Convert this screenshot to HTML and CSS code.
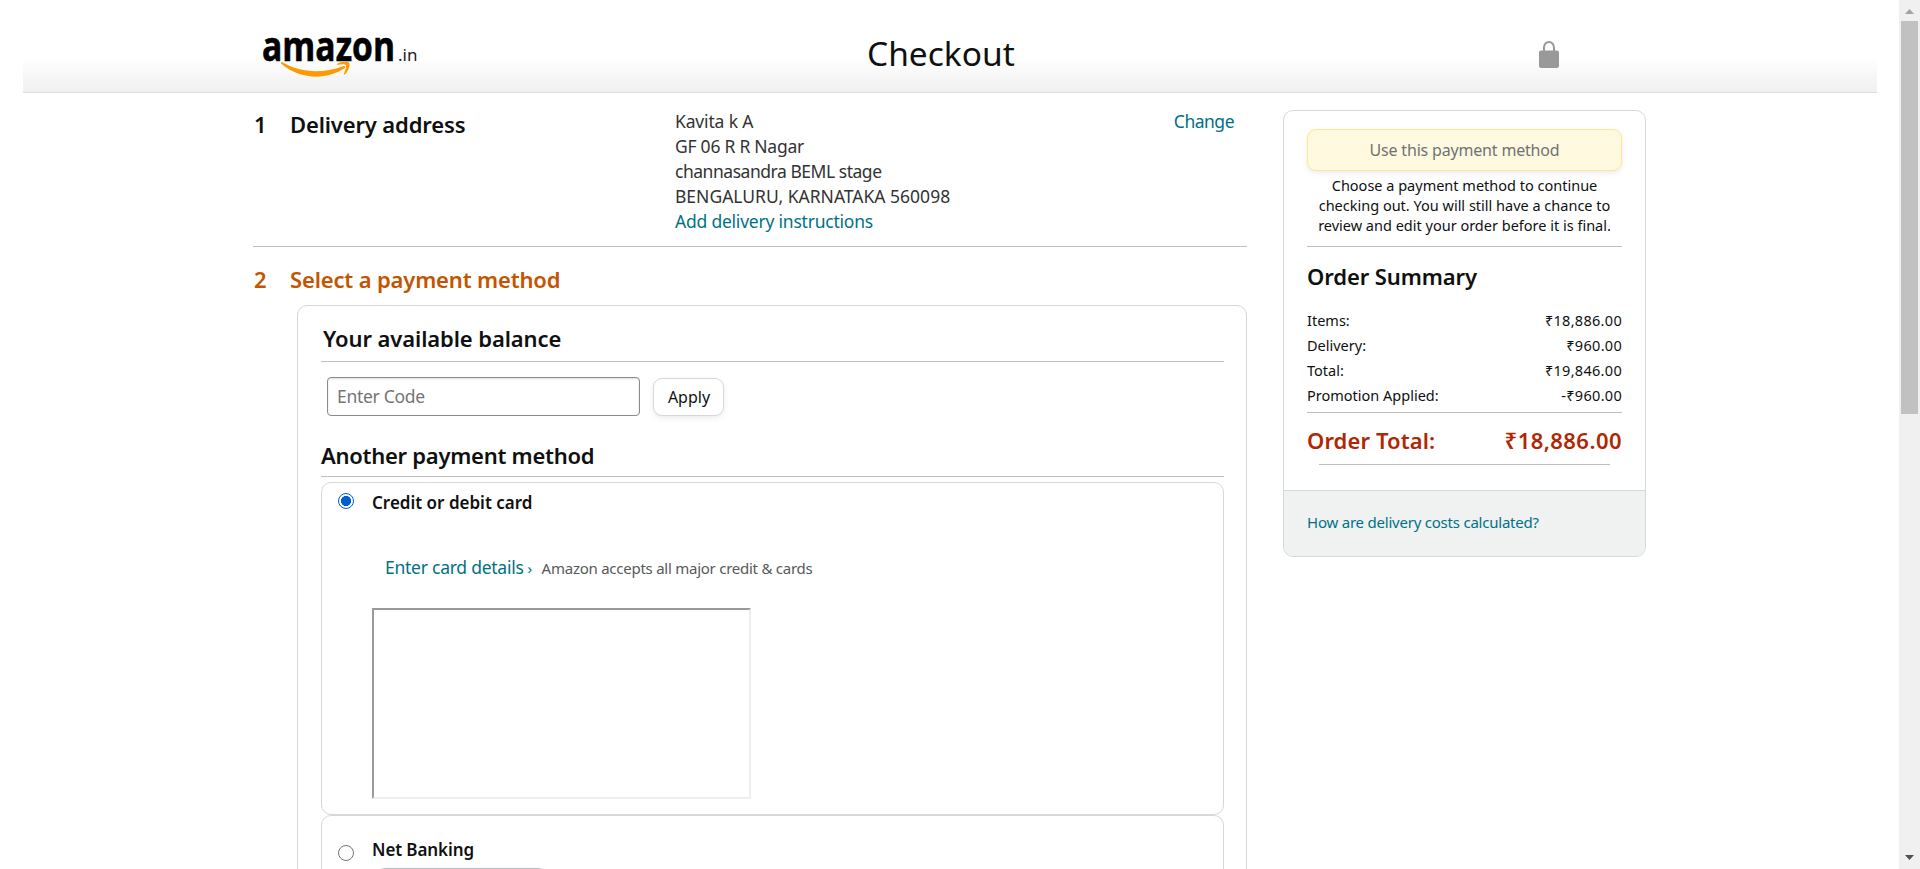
FILE: index.html
```html
<!DOCTYPE html>
<html lang="en">
<head>
<meta charset="utf-8">
<title>Checkout</title>
<link rel="stylesheet" href="styles.css">
</head>
<body>
<div class="page">
  <header class="header">
    <svg class="logo" width="160" height="50" viewBox="0 0 160 50" role="img">
      <text class="logo-name" x="-1" y="30" textLength="133" lengthAdjust="spacingAndGlyphs">amazon</text>
      <text class="logo-tld" x="135" y="30">.in</text>
      <path fill="#f90" d="M19.5 31.3C35 41 58 43.500 80 35.200C82 34.500 83.200 36 81.500 37.300C62 50 36 48 18.300 32.700C17.300 31.700 18.300 30.700 19.500 31.300Z"/>
      <path fill="#f90" d="M74 33C77 30.500 84 30 86 31.500C87.500 33.500 85.500 40.500 81.800 43.400C81 43.800 80.600 43.400 81 42.600C82.200 39.500 83.800 35.500 82.800 34C81.500 32.800 77.500 33.400 75 33.800C74 33.900 73.500 33.500 74 33Z"/>
    </svg>
    <h1 class="title">Checkout</h1>
    <svg class="lock" width="20" height="27" viewBox="0 0 20 27">
      <path fill="#999" d="M2 9.500H4V7.200C4 3 6.500 0 10 0S16 3 16 7.200V9.500H18Q20 9.500 20 11.500V25Q20 27 18 27H2Q0 27 0 25V11.500Q0 9.500 2 9.500ZM6 9.500H14V7C14 4 12.500 2 10 2S6 4 6 7Z"/>
    </svg>
  </header>

  <div class="columns">
    <main class="main">
      <section class="step step-address">
        <div class="heading num">1</div>
        <h2 class="heading head-address">Delivery address</h2>
        <div class="address">
          <div class="addr-name">Kavita k A</div>
          <div class="addr-house">GF 06 R R Nagar</div>
          <div class="addr-street">channasandra BEML stage</div>
          <div class="addr-city">BENGALURU, KARNATAKA 560098</div>
          <a class="link addr-add">Add delivery instructions</a>
        </div>
        <a class="link change">Change</a>
      </section>

      <section class="step-payment">
        <div class="payment-title">
          <div class="heading num">2</div>
          <h2 class="heading head-select">Select a payment method</h2>
        </div>
        <div class="panel">
          <h3 class="heading head-balance">Your available balance</h3>
          <div class="code-row">
            <input class="code" type="text" placeholder="Enter Code">
            <button class="apply">Apply</button>
          </div>
          <h3 class="heading head-another">Another payment method</h3>

          <div class="method method-card">
            <span class="radio radio-on"></span>
            <div class="method-body">
              <div class="method-name name-card">Credit or debit card</div>
              <div class="card-row">
                <a class="link card-link">Enter card details</a>
                <span class="link chevron">›</span>
                <span class="card-note">Amazon accepts all major credit &amp; cards</span>
              </div>
              <div class="frame"></div>
            </div>
          </div>

          <div class="method method-bank">
            <span class="radio"></span>
            <div class="method-body">
              <div class="method-name name-bank">Net Banking</div>
              <div class="select"></div>
            </div>
          </div>
        </div>
      </section>
    </main>

    <aside class="summary">
      <div class="summary-body">
        <button class="use">Use this payment method</button>
        <p class="hint">Choose a payment method to continue<br>checking out. You will still have a chance to<br>review and edit your order before it is final.</p>
        <h3 class="heading head-summary">Order Summary</h3>
        <div class="row"><span>Items:</span><span class="amount">₹18,886.00</span></div>
        <div class="row"><span>Delivery:</span><span class="amount">₹960.00</span></div>
        <div class="row"><span>Total:</span><span class="amount">₹19,846.00</span></div>
        <div class="row"><span>Promotion Applied:</span><span class="amount">-₹960.00</span></div>
        <div class="total heading"><span class="total-label">Order Total:</span><span class="total-value">₹18,886.00</span></div>
        <div class="rule"></div>
      </div>
      <div class="summary-foot"><a class="link costs">How are delivery costs calculated?</a></div>
    </aside>
  </div>

  <div class="scrollbar">
    <svg width="9" height="5" viewBox="0 0 9 5"><path fill="#a3a3a3" d="M0 5L4.500 0L9 5Z"/></svg>
    <div class="thumb"></div>
    <svg class="down" width="9" height="5" viewBox="0 0 9 5"><path fill="#505050" d="M0 0H9L4.500 5Z"/></svg>
  </div>
</div>
</body>
</html>
```
FILE: styles.css
```css
* { box-sizing: border-box; }

body {
  margin: 0;
  background: #fff;
  color: #0f1111;
  font-family: "Noto Sans", "Open Sans", sans-serif;
  font-size: 15px;
}

.page {
  position: relative;
  height: 869px;
  overflow: hidden;
}

h1, h2, h3, p { margin: 0; font-weight: 400; }

/* header */
.header {
  display: flex;
  height: 93px;
  margin: 0 43px 0 23px;
  padding-left: 240px;
  border-bottom: 1px solid #ddd;
  background: linear-gradient(to bottom, #fff 0, #fff 57px, #f0f0f0 92px);
}
.logo { margin-top: 31px; width: 160px; flex: none; overflow: visible; }
.logo-name { font: 700 41px "Open Sans", sans-serif; fill: #000; stroke: #000; stroke-width: .6px; }
.logo-tld { font: 400 17px "Noto Sans", sans-serif; fill: #222; }
.title {
  margin: 29px 0 0 444px;
  font-size: 33.500px;
  line-height: 48px;
  flex: 0 0 672px;
}
.lock { margin-top: 41px; flex: none; }

/* columns */
.columns {
  display: flex;
  align-items: flex-start;
  padding-left: 253px;
}
.main { width: 994px; }

.heading {
  font-size: 22px;
  line-height: 30px;
  font-weight: 600;
}
.head-address { letter-spacing: -.15px; }
.head-select { letter-spacing: -.16px; }
.link { color: #007185; }

.step-address {
  display: grid;
  grid-template-columns: 37px 385px 1fr auto;
  height: 154px;
  padding: 16px 13px 0 0;
  border-bottom: 1px solid #bbbfbf;
}
.num { padding-left: 1px; width: 37px; }
.address, .change { font-size: 17.500px; line-height: 25px; }
.address { color: #333; }
.address .link { display: block; }
.addr-name { letter-spacing: -.15px; }
.addr-house { letter-spacing: -.25px; }
.addr-street { letter-spacing: -.47px; }
.addr-add { letter-spacing: -.22px; }
.change { letter-spacing: -.5px; }

.payment-title { display: flex; padding-top: 17px; color: #c45500; }

.panel {
  height: 700px;
  margin: 11px 0 0 44px;
  padding: 17px 22px 0 23px;
  border: 1px solid #d5d9d9;
  border-radius: 10px;
}
.head-balance {
  padding: 0 0 8px 2px;
  border-bottom: 1px solid #bbbfbf;
  letter-spacing: -.1px;
}
.code-row { display: flex; gap: 13px; margin: 15px 0 0 6px; }
.code {
  width: 313px;
  height: 39px;
  padding: 0 9px 1px;
  border: 1px solid #888c8c;
  border-radius: 4px;
  box-shadow: 0 1px 2px rgba(15, 17, 17, .15) inset;
  font: 17.500px "Noto Sans", sans-serif;
  letter-spacing: -.3px;
}
.code::placeholder { color: #757575; }
.apply {
  width: 71px;
  height: 38px;
  margin-top: 1px;
  padding: 0 0 1px 1px;
  border: 1px solid #d5d9d9;
  border-radius: 9px;
  background: #fff;
  box-shadow: 0 2px 5px rgba(213, 217, 217, .5);
  color: #0f1111;
  font: 16px "Noto Sans", sans-serif;
}
.head-another {
  margin: 24px 0 5px;
  padding-bottom: 6px;
  border-bottom: 1px solid #bbbfbf;
  letter-spacing: -.27px;
}

.method {
  display: flex;
  height: 333px;
  padding: 6px 0 0 16px;
  border: 1px solid #d5d9d9;
  border-radius: 10px;
}
.method-bank { padding-top: 20px; }
.radio {
  width: 16px;
  height: 16px;
  margin: 4px 18px 0 0;
  border: 1px solid #767676;
  border-radius: 50%;
  flex: none;
}
.method-bank .radio { margin-top: 9px; }
.radio-on {
  border: 1.500px solid #005fcc;
  background: radial-gradient(circle, #005fcc 4.800px, #fff 5.300px);
}
.method-name {
  height: 25px;
  padding-top: 1px;
  font-size: 17px;
  line-height: 25px;
  font-weight: 600;
}
.name-bank { letter-spacing: -.1px; }
.card-row {
  display: flex;
  align-items: baseline;
  height: 25px;
  margin: 41px 0 28px 13px;
  font-size: 17.500px;
  line-height: 25px;
  white-space: nowrap;
}
.card-link { letter-spacing: -.25px; }
.chevron { margin-left: 4px; width: 14px; font-size: 15px; }
.card-note { color: #565959; font-size: 15px; letter-spacing: -.25px; }
.frame {
  width: 379px;
  height: 191px;
  border: 2px solid;
  border-color: #9a9a9a #eee #eee #9a9a9a;
}
.select {
  width: 171px;
  height: 34px;
  margin: 7px 0 0 4px;
  border: 1px solid #b8bcbc;
  border-radius: 9px;
  box-shadow: 0 2px 5px rgba(15, 17, 17, .15);
}

/* order summary */
.summary {
  width: 363px;
  height: 447px;
  margin: 17px 0 0 36px;
  border: 1px solid #d5d9d9;
  border-radius: 10px;
  overflow: hidden;
}
.summary-body { height: 379px; padding: 18px 23px 0; }
.use {
  display: block;
  width: 315px;
  height: 42px;
  padding: 0;
  border: 1px solid #ffe78f;
  border-radius: 9px;
  background: #fff9e0;
  box-shadow: 0 2px 5px rgba(213, 217, 217, .5);
  color: #6f7373;
  font: 16px "Noto Sans", sans-serif;
  letter-spacing: -.18px;
}
.hint {
  height: 76px;
  padding-top: 4px;
  border-bottom: 1px solid #bbbfbf;
  font-size: 14.500px;
  line-height: 20px;
  text-align: center;
  white-space: nowrap;
}
.head-summary { margin: 14px 0 17px; letter-spacing: -.1px; }
.row {
  display: flex;
  justify-content: space-between;
  font-size: 14.500px;
  line-height: 25px;
}
.amount { letter-spacing: .3px; }
.total {
  display: flex;
  justify-content: space-between;
  margin-top: 4px;
  padding-top: 12px;
  border-top: 1px solid #bbbfbf;
  color: #b12704;
}
.total-label { letter-spacing: .1px; }
.total-value { letter-spacing: .45px; }
.rule { margin: 9px 12px 0; border-top: 1px solid #bbbfbf; }
.summary-foot {
  height: 67px;
  padding: 19px 23px;
  border-top: 1px solid #d5d9d9;
  background: #eff2f1;
  line-height: 25px;
}
.costs { letter-spacing: -.22px; }

/* scrollbar */
.scrollbar {
  position: absolute;
  top: 0;
  right: 0;
  width: 21px;
  height: 869px;
  display: flex;
  flex-direction: column;
  align-items: center;
  padding: 9px 0;
  background: #f0f0f0;
}
.thumb { width: 17px; height: 393px; margin-top: 7px; background: #c1c1c1; }
.down { margin-top: auto; }
```
